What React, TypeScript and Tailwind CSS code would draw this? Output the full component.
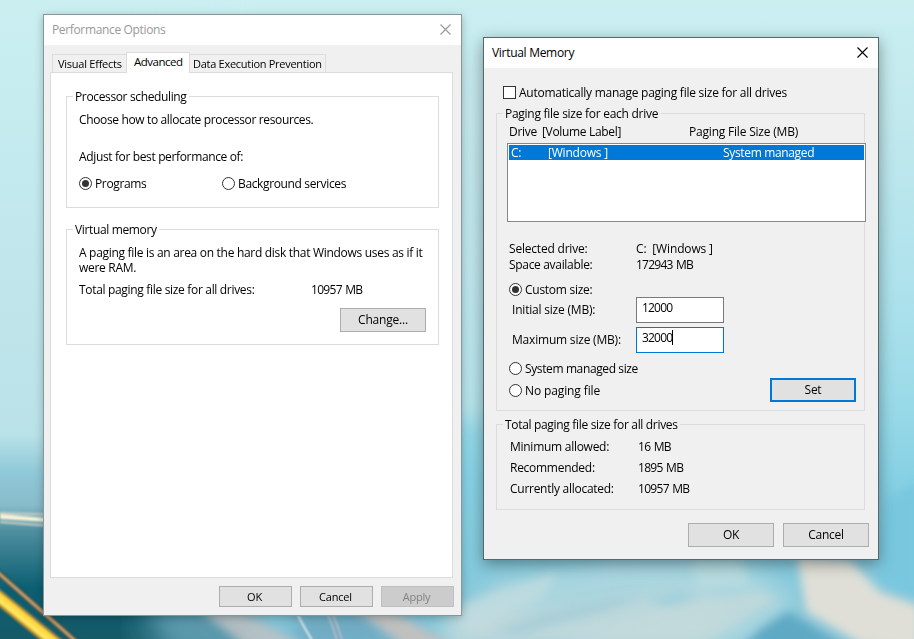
import clsx from "clsx";
import React, { FC, ReactNode } from "react";

const Wallpaper: FC = () => (
  <svg className="absolute inset-0" width="914" height="639" viewBox="0 0 914 639">
    <defs>
      <linearGradient id="left" x1="0" y1="0" x2="0" y2="1">
        <stop offset="0" stopColor="#cbeff1" />
        <stop offset="0.25" stopColor="#c3eaee" />
        <stop offset="0.5" stopColor="#bfe5ea" />
        <stop offset="0.68" stopColor="#b9e2e8" />
        <stop offset="0.74" stopColor="#8fc8d8" />
        <stop offset="0.79" stopColor="#88bccb" />
        <stop offset="0.83" stopColor="#4f8fa0" />
        <stop offset="0.92" stopColor="#0c5f72" />
        <stop offset="1" stopColor="#155a68" />
      </linearGradient>
      <linearGradient id="right" x1="0" y1="0" x2="0" y2="1">
        <stop offset="0" stopColor="#cbeff1" />
        <stop offset="0.2" stopColor="#c0e8ed" />
        <stop offset="0.45" stopColor="#aee2ec" />
        <stop offset="0.63" stopColor="#9adae8" />
        <stop offset="0.75" stopColor="#86d1e4" />
        <stop offset="1" stopColor="#84c4d7" />
      </linearGradient>
      <linearGradient id="fade" x1="0" y1="0" x2="1" y2="0">
        <stop offset="0" stopColor="#fff" stopOpacity="0" />
        <stop offset="0.13" stopColor="#fff" stopOpacity="0" />
        <stop offset="0.28" stopColor="#fff" />
      </linearGradient>
      <mask id="rightMask">
        <rect width="914" height="639" fill="url(#fade)" />
      </mask>
      <filter id="b1" x="-20%" y="-20%" width="140%" height="140%">
        <feGaussianBlur stdDeviation="0.8" />
      </filter>
      <filter id="b4" x="-50%" y="-50%" width="200%" height="200%">
        <feGaussianBlur stdDeviation="5" />
      </filter>
      <filter id="b10" x="-50%" y="-50%" width="200%" height="200%">
        <feGaussianBlur stdDeviation="10" />
      </filter>
    </defs>
    <rect width="914" height="639" fill="url(#left)" />
    <rect width="914" height="639" fill="url(#right)" mask="url(#rightMask)" />
    <g filter="url(#b10)">
      <path d="M452 60L492 60L492 420L452 420Z" fill="#c3e6ea" opacity="0.7" />
      <path d="M150 610L240 610L270 650L175 650Z" fill="#5a98ab" />
      <path d="M290 600L370 600L400 650L300 650Z" fill="#70acc3" />
      <path d="M430 630L500 580L620 560L740 560L800 600L740 650L450 650Z" fill="#a9d5df" />
      <path d="M440 650L470 610L580 610L690 590L740 610L690 650Z" fill="#c5d9db" opacity="0.8" />
    </g>
    <g filter="url(#b4)">
      <path d="M200 610L240 610L310 650L250 650Z" fill="#c0c3c6" opacity="0.85" />
      <path d="M350 606L390 610L460 650L410 650Z" fill="#c8c0bd" opacity="0.9" />
      <path d="M440 616L500 590L560 572L540 600L470 630Z" fill="#c3dde0" opacity="0.7" />
      <path d="M490 632L540 614L640 594L620 606L520 636Z" fill="#a2cbd6" opacity="0.7" />
      <path d="M560 645L660 610L760 590L775 600L700 645Z" fill="#c2d9db" opacity="0.8" />
      <path d="M690 560L740 560L750 585L700 590Z" fill="#bfdde0" opacity="0.6" />
      <path d="M645 600L680 590L700 598L670 608Z" fill="#8bcadb" opacity="0.5" />
      <path d="M740 650L760 630L788 612L850 650Z" fill="#5fa9c4" />
      <path d="M797 555L850 560L880 592L920 606L920 650L862 645L806 612Z" fill="#dfdfd7" />
      <path d="M884 500L920 480L920 600L878 582Z" fill="#78c7df" />
    </g>
    <g filter="url(#b1)">
      <path d="M0 514L46 518V522L0 519Z" fill="#f9f3d7" />
      <path d="M0 513L46 514.5M0 522L46 525.5" stroke="#d3d3c8" strokeWidth="2" />
      <path d="M-5 570L80 645" stroke="#35514f" strokeWidth="6" />
      <path d="M-5 570L80 645" stroke="#d1a46c" strokeWidth="2.5" />
      <path d="M-8 592L66 652" stroke="#b58a3b" strokeWidth="14" />
      <path d="M-8 592L66 652" stroke="#ffd944" strokeWidth="9" />
      <path d="M-8 594L66 654" stroke="#ffe863" strokeWidth="3" />
      <path d="M298 615Q303 626 312 640" stroke="#f1efed" strokeWidth="1.8" fill="none" />
      <path d="M328 615Q333 626 337 640M333 615Q338 626 342 640" stroke="#d3bfc0" strokeWidth="1.4" fill="none" />
    </g>
  </svg>
);

const CloseIcon: FC<{ className?: string }> = ({ className }) => (
  <svg className={className} width="11" height="11" viewBox="0 0 11 11" fill="none">
    <path d="M0.5 0.5L10.5 10.5M10.5 0.5L0.5 10.5" stroke="currentColor" strokeWidth="1.1" />
  </svg>
);

interface WindowProps {
  title: string;
  active?: boolean;
  className?: string;
  children: ReactNode;
}

const Window: FC<WindowProps> = ({ title, active, className, children }) => (
  <section className={clsx("absolute flex flex-col border bg-[#f0f0f0]", className)}>
    <header
      className={clsx(
        "flex h-[30px] shrink-0 justify-between bg-white pl-2 pr-2.5 pt-[7px]",
        active ? "text-black" : "text-[#999999]"
      )}
    >
      <h1 className={active ? "tracking-[-0.3px]" : "tracking-[-0.35px]"}>{title}</h1>
      <CloseIcon className="mt-[2px]" />
    </header>
    {children}
  </section>
);

interface GroupProps {
  legend: string;
  className?: string;
  legendClass?: string;
  children: ReactNode;
}

const Group: FC<GroupProps> = ({ legend, className, legendClass, children }) => (
  <div className={clsx("flex flex-col border border-[#dcdcdc]", className)}>
    <h2 className={clsx("-mt-2 ml-1.5 h-4 self-start px-0.5", legendClass)}>{legend}</h2>
    {children}
  </div>
);

interface RadioProps {
  label: string;
  checked?: boolean;
  className?: string;
}

const Radio: FC<RadioProps> = ({ label, checked, className }) => (
  <div className={clsx("flex h-4 gap-[3px]", className)}>
    <svg className="mt-px shrink-0" width="13" height="13" viewBox="0 0 13 13">
      <circle cx="6.5" cy="6.5" r="6" fill="#fff" stroke="#333" />
      {checked && <circle cx="6.5" cy="6.5" r="3.5" fill="#333" />}
    </svg>
    <span>{label}</span>
  </div>
);

interface ButtonProps {
  children: ReactNode;
  className?: string;
}

const Button: FC<ButtonProps> = ({ children, className = "h-6 w-[86px] border border-[#adadad] bg-[#e1e1e1]" }) => (
  <button className={clsx("flex shrink-0 items-center justify-center", className)}>{children}</button>
);

const smallButton = "h-[21px] w-[73px] border pr-0.5 pt-px text-[11px] tracking-[-0.2px]";

const totals = [
  { label: "Minimum allowed:", value: "16 MB" },
  { label: "Recommended:", value: "1895 MB" },
  { label: "Currently allocated:", value: "10957 MB" },
];

const PerformanceOptions: FC = () => (
  <Window
    title="Performance Options"
    className="left-[43px] top-[14px] h-[602px] w-[419px] border-[#87989b] tracking-[-0.36px] shadow-[0_2px_8px_rgba(0,0,0,0.25)]"
  >
    <nav className="ml-2 mt-[7px] flex h-5 items-end text-[11px] leading-[17px]">
      <div className="h-[18px] w-[75px] border border-b-0 border-[#dcdcdc] pl-[5px] tracking-[-0.25px]">Visual Effects</div>
      <div className="z-10 -mb-px -ml-px h-[21px] w-[64px] border border-b-0 border-[#dcdcdc] bg-white pl-[7px] text-[11.5px] leading-[18px] tracking-[-0.5px]">
        Advanced
      </div>
      <div className="-ml-px h-[18px] w-[137px] border border-b-0 border-[#dcdcdc] pl-[3px] tracking-[-0.28px]">
        Data Execution Prevention
      </div>
    </nav>
    <main className="ml-1.5 flex h-[506px] w-[403px] flex-col border border-[#dcdcdc] bg-white pl-[15px]">
      <Group legend="Processor scheduling" legendClass="bg-white" className="mt-[23px] h-[112px] w-[373px]">
        <p className="ml-3 mt-[7px]">Choose how to allocate processor resources.</p>
        <p className="ml-3 mt-[21px]">Adjust for best performance of:</p>
        <div className="ml-3 mt-[11px] flex">
          <Radio label="Programs" checked className="w-[143px]" />
          <Radio label="Background services" />
        </div>
      </Group>
      <Group legend="Virtual memory" legendClass="bg-white" className="mt-[21px] h-[116px] w-[373px]">
        <p className="ml-3 mt-[7px] leading-[15px] tracking-[-0.3px]">
          A paging file is an area on the hard disk that Windows uses as if it
          <br />
          were RAM.
        </p>
        <div className="ml-3 mt-[7px] flex">
          <span className="w-[232px] tracking-[-0.32px]">Total paging file size for all drives:</span>
          <span className="tracking-[-0.7px] [word-spacing:1px]">10957 MB</span>
        </div>
        <div className="mr-3 mt-2.5 flex justify-end">
          <Button className="h-6 w-[86px] border border-[#adadad] bg-[#e1e1e1] tracking-[-0.2px]">Change...</Button>
        </div>
      </Group>
    </main>
    <footer className="mr-[7px] mt-2 flex justify-end gap-2">
      <Button className={clsx(smallButton, "border-[#adadad] bg-[#e1e1e1]")}>OK</Button>
      <Button className={clsx(smallButton, "border-[#adadad] bg-[#e1e1e1]")}>Cancel</Button>
      <Button className={clsx(smallButton, "border-[#bfbfbf] bg-[#cccccc] text-[#838383]")}>Apply</Button>
    </footer>
  </Window>
);

const VirtualMemory: FC = () => (
  <Window
    title="Virtual Memory"
    active
    className="left-[483px] top-[37px] h-[523px] w-[396px] border-[#526a6d] tracking-[-0.27px] shadow-[0_4px_14px_rgba(0,0,0,0.38)]"
  >
    <div className="ml-[19px] mt-[17px] flex h-4 gap-[3px]">
      <span className="mt-px size-[13px] border border-[#333] bg-white" />
      <span className="tracking-[-0.25px]">Automatically manage paging file size for all drives</span>
    </div>
    <Group
      legend="Paging file size for each drive"
      legendClass="bg-[#f0f0f0]"
      className="ml-3 mt-3 h-[298px] w-[369px]"
    >
      <div className="ml-3 mt-0.5 flex">
        <span className="w-[33px]">Drive</span>
        <span className="w-[147px] tracking-[-0.33px]">[Volume Label]</span>
        <span className="tracking-[-0.2px]">Paging File Size (MB)</span>
      </div>
      <div className="ml-2.5 mt-[3px] h-[79px] w-[359px] shrink-0 border border-[#828790] bg-white p-px">
        <div className="flex h-[15px] bg-[#0078d7] pl-0.5 text-white">
          <span className="w-[37px]">C:</span>
          <span className="w-[175px] tracking-[-0.2px]">[Windows ]</span>
          <span className="tracking-[-0.34px]">System managed</span>
        </div>
      </div>
      <div className="ml-3 mt-[19px] grid grid-cols-[127px_1fr]">
        <span className="tracking-[-0.2px]">Selected drive:</span>
        <span className="whitespace-pre tracking-[-0.15px]">C:  [Windows ]</span>
        <span className="tracking-[-0.32px]">Space available:</span>
        <span className="tracking-[-0.75px] [word-spacing:1px]">172943 MB</span>
      </div>
      <Radio label="Custom size:" checked className="ml-3 mt-[9px]" />
      <div className="-mt-px ml-[15px] flex items-center">
        <span className="w-[124px] tracking-[-0.2px]">Initial size (MB):</span>
        <div className="h-[26px] w-[88px] border border-[#7a7a7a] bg-white pl-[5px] pt-0.5 tracking-[-0.8px]">12000</div>
      </div>
      <div className="ml-[15px] mt-1 flex items-center">
        <span className="w-[124px] tracking-[-0.2px]">Maximum size (MB):</span>
        <div className="flex h-[26px] w-[88px] border border-[#0078d7] bg-white pl-[5px] pt-0.5 tracking-[-0.8px]">
          32000
          <span className="h-[15px] w-px bg-black" />
        </div>
      </div>
      <Radio label="System managed size" className="ml-3 mt-2 tracking-[-0.38px]" />
      <div className="ml-3 mr-2 mt-px flex justify-between">
        <Radio label="No paging file" className="mt-[5px] tracking-[-0.12px]" />
        <Button className="h-6 w-[86px] border-2 border-[#0078d7] bg-[#e1e1e1]">Set</Button>
      </div>
    </Group>
    <Group
      legend="Total paging file size for all drives"
      legendClass="bg-[#f0f0f0] tracking-[-0.32px]"
      className="ml-3 mt-[13px] h-[86px] w-[369px]"
    >
      <div className="ml-[13px] mt-1.5 flex flex-col gap-[5px]">
        {totals.map((item) => (
          <div key={item.label} className="flex">
            <span className="w-32">{item.label}</span>
            <span className="tracking-[-0.7px] [word-spacing:1px]">{item.value}</span>
          </div>
        ))}
      </div>
    </Group>
    <footer className="mr-[9px] mt-[13px] flex justify-end gap-[9px]">
      <Button>OK</Button>
      <Button>Cancel</Button>
    </footer>
  </Window>
);

const App: FC = () => {
  return (
    <div className="relative h-[639px] w-[914px] overflow-hidden whitespace-nowrap bg-[#c3eaee] font-['Open_Sans','Noto_Sans',sans-serif] text-xs leading-4 text-black">
      <Wallpaper />
      <PerformanceOptions />
      <VirtualMemory />
    </div>
  );
};

export default App;
